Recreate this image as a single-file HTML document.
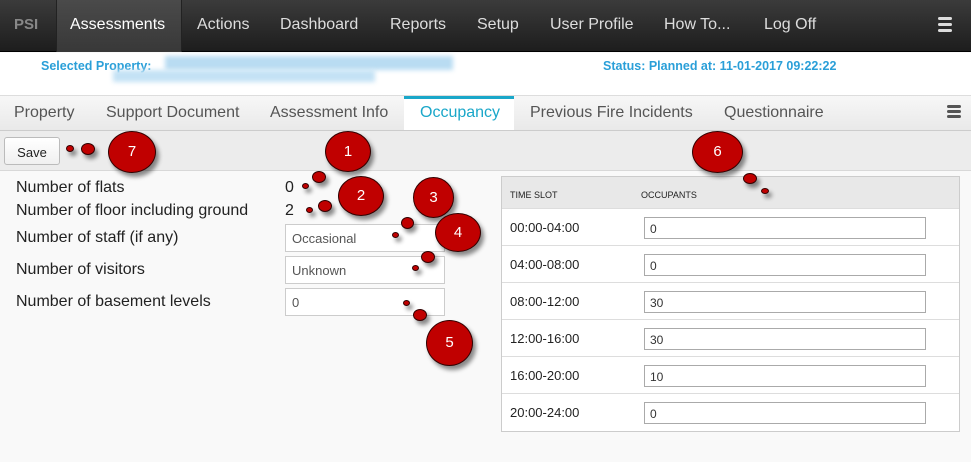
<!DOCTYPE html>
<html><head><style>
*{margin:0;padding:0;box-sizing:border-box}
body{width:971px;height:462px;overflow:hidden;background:#f9f9f9;font-family:"Liberation Sans",Arial,sans-serif;position:relative}
.a{position:absolute}
.nav{left:0;top:0;width:971px;height:52px;background:linear-gradient(#3b3b3b,#1d1d1d);border-bottom:1px solid #000}
.nav span{position:absolute;top:16px;font-size:16px;color:#ddd}
.act{left:56px;top:0;width:126px;height:52px;background:linear-gradient(#4a4a4a,#383838);border-left:1px solid #222;border-right:1px solid #222}
.ham{width:14px;height:3px;background:#ddd;border-radius:2px}
.info{left:0;top:53px;width:971px;height:43px;background:#fff;border-bottom:1px solid #ddd}
.blue{color:#2a9fd8;font-weight:bold;font-size:12.5px}
.tabs{left:0;top:96px;width:971px;height:35px;background:linear-gradient(#f7f7f7,#e9e9e9);border-bottom:1px solid #ccc}
.tabs span{position:absolute;top:8px;font-size:16px;color:#555}
.tb{left:0;top:131px;width:971px;height:40px;background:#ececec;border-bottom:1px solid #d8d8d8}
.lbl{font-size:16px;color:#222}
.inp{background:#fff;border:1px solid #ccc;font-size:13px;color:#555;padding:6px 0 0 6px}
.tbl{left:501px;top:176px;width:459px;height:256px;border:1px solid #ccc;background:#fff}
.row{position:absolute;left:0;width:457px;height:37px;border-top:1px solid #ddd}
.row span{position:absolute;left:8px;top:11px;font-size:13px;color:#222}
.row div{position:absolute;left:142px;top:8px;width:282px;height:22px;border:1px solid #aaa;font-size:12px;padding:4px 0 0 5px;color:#333}
.b{position:absolute;background:#c00000;border:1px solid #300;border-radius:50%;box-shadow:3px 4px 4px rgba(0,0,0,.45);color:#fff;font-size:15px;text-align:center}
</style></head><body>
<div class="a nav">
<span style="left:14px;color:#888;font-weight:bold;font-size:15px">PSI</span>
<div class="a act"></div>
<span style="left:70px;color:#fff">Assessments</span>
<span style="left:197px">Actions</span>
<span style="left:280px">Dashboard</span>
<span style="left:390px">Reports</span>
<span style="left:477px">Setup</span>
<span style="left:550px">User Profile</span>
<span style="left:664px">How To...</span>
<span style="left:764px">Log Off</span>
<div class="a ham" style="left:938px;top:17px"></div><div class="a ham" style="left:938px;top:23px"></div><div class="a ham" style="left:938px;top:29px"></div>
</div>
<div class="a info">
<span class="a blue" style="left:41px;top:6px">Selected Property:</span>
<div class="a" style="left:165px;top:3px;width:288px;height:14px;background:#b9dcf2;filter:blur(2.5px)"></div>
<div class="a" style="left:113px;top:17px;width:262px;height:12px;background:#c4e2f5;filter:blur(2.5px)"></div>
<span class="a blue" style="left:603px;top:6px">Status: Planned at: 11-01-2017 09:22:22</span>
</div>
<div class="a tabs">
<span style="left:14px">Property</span>
<span style="left:106px">Support Document</span>
<span style="left:270px">Assessment Info</span>
<div class="a" style="left:404px;top:0;width:110px;height:34px;background:#fff;border-top:3px solid #1aa7c9"></div>
<span style="left:420px;color:#1aa7c9">Occupancy</span>
<span style="left:530px">Previous Fire Incidents</span>
<span style="left:724px">Questionnaire</span>
<div class="a ham" style="left:947px;top:9px;background:#555"></div><div class="a ham" style="left:947px;top:14px;background:#555"></div><div class="a ham" style="left:947px;top:19px;background:#555"></div>
</div>
<div class="a tb">
<div class="a" style="left:4px;top:6px;width:56px;height:28px;border:1px solid #bbb;border-radius:3px;background:linear-gradient(#fff,#f0f0f0);font-size:13px;color:#222;text-align:center;padding-top:7px">Save</div>
</div>
<span class="a lbl" style="left:16px;top:179px">Number of flats</span>
<span class="a lbl" style="left:285px;top:179px">0</span>
<span class="a lbl" style="left:16px;top:202px">Number of floor including ground</span>
<span class="a lbl" style="left:285px;top:202px">2</span>
<span class="a lbl" style="left:16px;top:229px">Number of staff (if any)</span>
<span class="a lbl" style="left:16px;top:261px">Number of visitors</span>
<span class="a lbl" style="left:16px;top:293px">Number of basement levels</span>
<div class="a inp" style="left:285px;top:224px;width:160px;height:28px">Occasional</div>
<div class="a inp" style="left:285px;top:256px;width:160px;height:28px">Unknown</div>
<div class="a inp" style="left:285px;top:288px;width:160px;height:28px">0</div>
<div class="a tbl">
<div class="a" style="left:0;top:0;width:457px;height:32px;background:#e8e8e8;font-size:9px;color:#222"><span class="a" style="left:8px;top:13px">TIME SLOT</span><span class="a" style="left:139px;top:13px">OCCUPANTS</span></div>
<div class="row" style="top:31px"><span>00:00-04:00</span><div>0</div></div>
<div class="row" style="top:68px"><span>04:00-08:00</span><div>0</div></div>
<div class="row" style="top:105px"><span>08:00-12:00</span><div>30</div></div>
<div class="row" style="top:142px"><span>12:00-16:00</span><div>30</div></div>
<div class="row" style="top:179px"><span>16:00-20:00</span><div>10</div></div>
<div class="row" style="top:216px"><span>20:00-24:00</span><div>0</div></div>
</div>
<div class="b" style="left:66px;top:145px;width:8px;height:7px"></div>
<div class="b" style="left:81px;top:143px;width:14px;height:12px"></div>
<div class="b" style="left:108px;top:131px;width:48px;height:42px;line-height:40px">7</div>
<div class="b" style="left:325px;top:131px;width:46px;height:41px;line-height:40px">1</div>
<div class="b" style="left:312px;top:171px;width:14px;height:12px"></div>
<div class="b" style="left:302px;top:183px;width:7px;height:6px"></div>
<div class="b" style="left:338px;top:176px;width:46px;height:40px;line-height:38px">2</div>
<div class="b" style="left:318px;top:200px;width:14px;height:12px"></div>
<div class="b" style="left:306px;top:207px;width:7px;height:6px"></div>
<div class="b" style="left:413px;top:177px;width:41px;height:41px;line-height:40px">3</div>
<div class="b" style="left:401px;top:217px;width:13px;height:12px"></div>
<div class="b" style="left:392px;top:232px;width:7px;height:6px"></div>
<div class="b" style="left:435px;top:213px;width:46px;height:39px;line-height:37px">4</div>
<div class="b" style="left:421px;top:251px;width:14px;height:12px"></div>
<div class="b" style="left:412px;top:265px;width:7px;height:6px"></div>
<div class="b" style="left:403px;top:300px;width:7px;height:6px"></div>
<div class="b" style="left:413px;top:309px;width:14px;height:12px"></div>
<div class="b" style="left:426px;top:320px;width:47px;height:46px;line-height:44px">5</div>
<div class="b" style="left:692px;top:131px;width:51px;height:42px;line-height:40px">6</div>
<div class="b" style="left:743px;top:173px;width:14px;height:11px"></div>
<div class="b" style="left:761px;top:188px;width:8px;height:6px"></div>
</body></html>
